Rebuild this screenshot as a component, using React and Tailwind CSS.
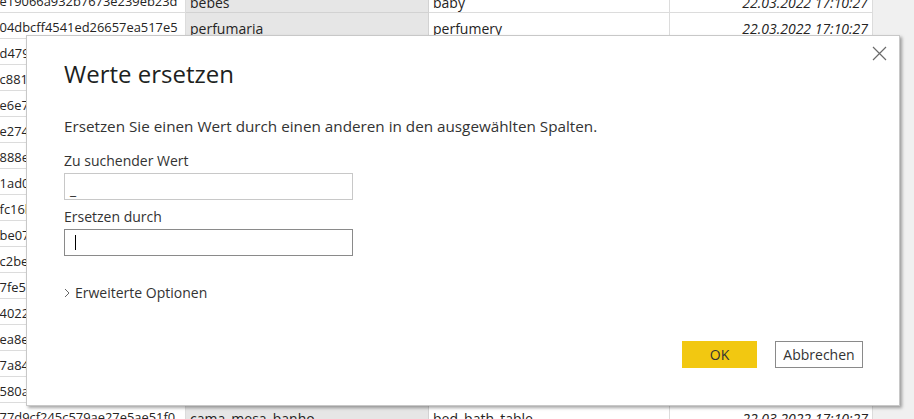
import React from "react";

const rows = [
  ["5730186e19066a932b7673e239eb23d", "bebes", "baby"],
  ["963725104dbcff4541ed26657ea517e5", "perfumaria", "perfumery"],
  ["3810529d4791a6f0e2b3c4d5e6f7a8b9", "beleza_saude", "health_beauty"],
  ["7209163c881d3b4e5f6a7b8c9d0e1f2a", "informatica_acessorios", "computers_accessories"],
  ["1468208e6e7a2d3c4b5a6f7e8d9c0b1a", "automotivo", "auto"],
  ["8224609e2740b1c2d3e4f5a6b7c8d9e0", "cama_mesa_banho", "bed_bath_table"],
  ["2907531888e1f2a3b4c5d6e7f8a9b0c1", "moveis_decoracao", "furniture_decor"],
  ["63557021ad0c2e4f6a8b0c2d4e6f8a0b", "esporte_lazer", "sports_leisure"],
  ["4882064fc16b3d5f7a9c1e3b5d7f9a1c", "utilidades_domesticas", "housewares"],
  ["9113505be07a2c4e6f8a0b2d4f6a8c0e", "telefonia", "telephony"],
  ["3557909c2be1d3f5a7b9c1e3f5a7b9d1", "relogios_presentes", "watches_gifts"],
  ["57991017fe5c3e5a7c9e1b3d5f7a9c1e", "alimentos_bebidas", "food_drink"],
  ["80226444022d4f6a8c0e2a4c6e8a0c2e", "papelaria", "stationery"],
  ["1335777ea8e5b7d9f1a3c5e7a9b1d3f5", "brinquedos", "toys"],
  ["68002277a84f6a8c0e2b4d6f8a0c2e4a", "tablets_impressao_imagem", "tablets_printing_image"],
  ["2446878580a7c9e1a3b5d7f9b1d3f5a7", "ferramentas_jardim", "garden_tools"],
  ["314195077d9cf245c579ae27e5ae51f0", "cama_mesa_banho", "bed_bath_table"],
];

const sans = { fontFamily: '"Open Sans", "Noto Sans", sans-serif' };

function Table() {
  return (
    <div className="flex flex-col -mt-[13px]">
      {rows.map((r, i) => (
        <div
          key={i}
          className="grid grid-cols-[186px_243px_241px_203px] h-[26px] text-[#252423]"
        >
          <div className="overflow-hidden whitespace-nowrap border-r border-b border-[#dcdcdc] bg-white flex items-center pt-[5px] text-[12.9px]">
            <span className="-ml-[52px]">{r[0]}</span>
          </div>
          <div className="overflow-hidden whitespace-nowrap border-r border-b border-[#d2d2d2] bg-[#e6e6e6] flex items-center pl-[4px] pt-[5px] text-[14px]">
            {r[1]}
          </div>
          <div className="overflow-hidden whitespace-nowrap border-r border-b border-[#dcdcdc] bg-white flex items-center pl-[4px] pt-[5px] text-[14px]">
            {r[2]}
          </div>
          <div className="overflow-hidden whitespace-nowrap border-r border-b border-[#dcdcdc] bg-white flex items-center justify-end pr-[4px] pt-[5px] italic text-[14px]">
            22.03.2022 17:10:27
          </div>
        </div>
      ))}
    </div>
  );
}

function Dialog() {
  return (
    <div
      className="absolute left-[26px] top-[35px] w-[874px] h-[371px] bg-white border border-[#c8c8c8] shadow-[2px_2px_3px_rgba(0,0,0,0.35)] flex flex-col pl-[37px] pr-[36px] pt-[22px] pb-[37px] text-[#333]"
      style={sans}
    >
      <button className="absolute right-[12px] top-[9px] w-[16px] h-[16px] flex items-center justify-center">
        <svg width="15" height="15" viewBox="0 0 15 15">
          <path d="M1 1 L14 14 M14 1 L1 14" stroke="#6b6b6b" strokeWidth="1.2" fill="none" />
        </svg>
      </button>
      <h1 className="text-[24px] leading-[32px] font-normal text-[#201f1e]">Werte ersetzen</h1>
      <p className="mt-[26px] text-[15.25px] leading-[20px]">
        Ersetzen Sie einen Wert durch einen anderen in den ausgewählten Spalten.
      </p>
      <label className="mt-[15px] text-[14px] leading-[20px]">Zu suchender Wert</label>
      <div className="mt-[2px] w-[289px] h-[27px] border border-[#c8c8c8] flex items-end pl-[5px] pb-[1px] text-[14px] leading-[16px]">
        _
      </div>
      <label className="mt-[7px] text-[14px] leading-[20px]">Ersetzen durch</label>
      <div className="mt-[2px] w-[289px] h-[27px] border border-[#8a8a8a] flex items-center pl-[10px]">
        <div className="w-[1px] h-[15px] bg-black" />
      </div>
      <div className="mt-[27px] flex items-center gap-[5px] text-[14px] leading-[20px]">
        <svg width="6" height="10" viewBox="0 0 6 10">
          <path d="M1 1 L5 5 L1 9" stroke="#666" strokeWidth="1" fill="none" />
        </svg>
        <span>Erweiterte Optionen</span>
      </div>
      <div className="mt-auto flex justify-end gap-[18px]">
        <button className="w-[75px] h-[27px] bg-[#f2c811] text-[14px] text-[#333]">OK</button>
        <button className="w-[88px] h-[27px] border border-[#8a8a8a] bg-white text-[14px] text-[#333]">
          Abbrechen
        </button>
      </div>
    </div>
  );
}

export default function App() {
  return (
    <div className="relative w-[914px] h-[419px] overflow-hidden bg-[#f0f0f0]" style={sans}>
      <Table />
      <Dialog />
    </div>
  );
}
